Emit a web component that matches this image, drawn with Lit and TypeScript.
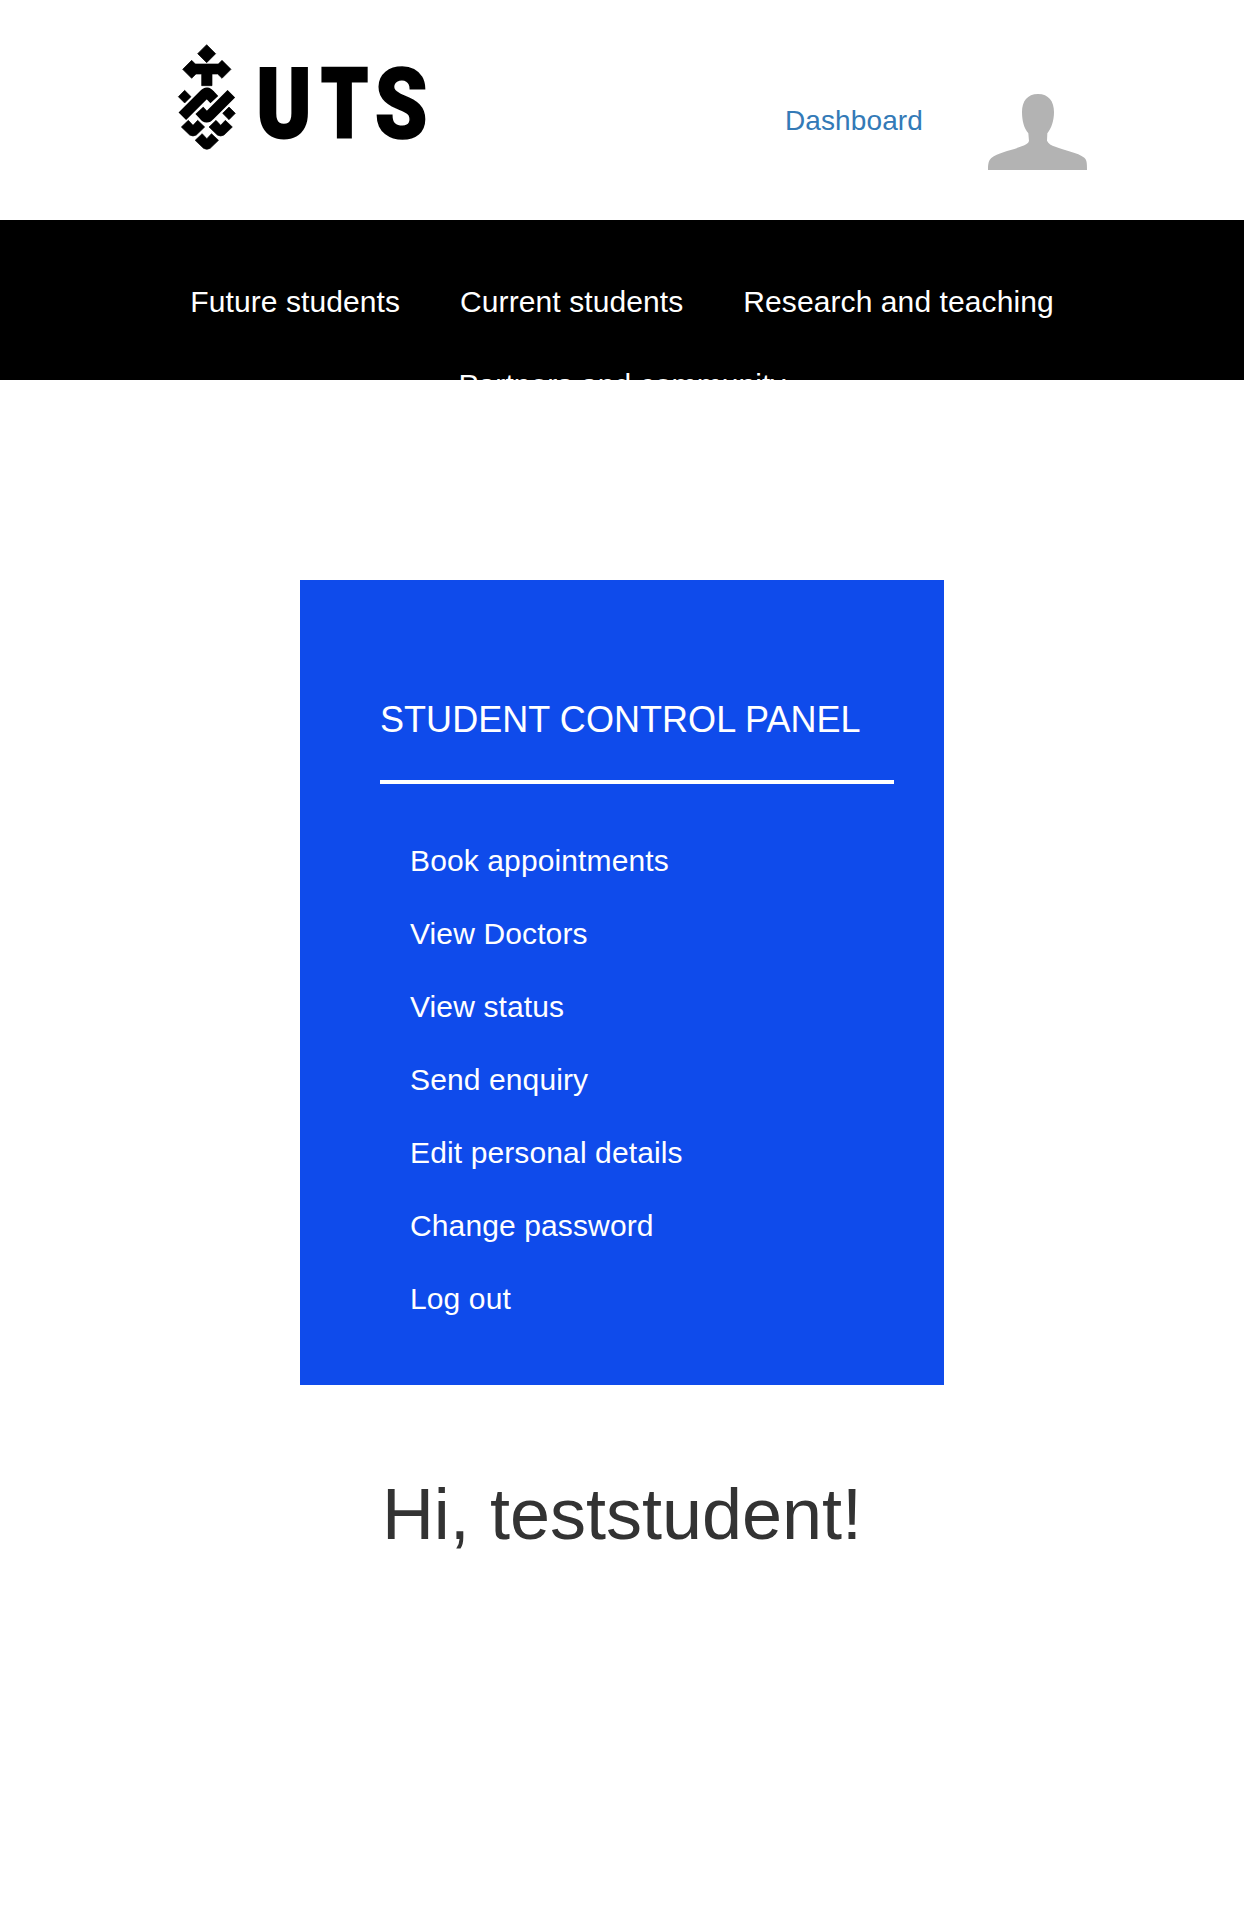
import { LitElement, html, svg, css } from "lit";
import { customElement } from "lit/decorators.js";

const NAV = ["Future students", "Current students", "Research and teaching", "Partners and community"];
const MENU = [
  "Book appointments",
  "View Doctors",
  "View status",
  "Send enquiry",
  "Edit personal details",
  "Change password",
  "Log out",
];

const chevron = (x: number, y: number) => svg`
  <path transform="translate(${x} ${y})"
    d="M-14 -20 L0 -5 L14 -20 L35 0 L10 24 Q0 30 -10 24 L-35 0Z"/>`;

@customElement("app-root")
export class AppRoot extends LitElement {
  static styles = css`
    :host {
      display: block;
      min-height: 1924px;
      background: #fff;
      color: #333;
      font: 30px/43px "Liberation Sans", Arial, sans-serif;
    }
    a { text-decoration: none; color: inherit; }
    ul { list-style: none; margin: 0; padding: 0; }
    .header {
      box-sizing: border-box;
      height: 220px;
      padding: 30px 157px 0 160px;
      display: flex;
      align-items: flex-start;
    }
    .logo { display: block; width: 280px; height: 130px; overflow: visible; }
    .wordmark {
      font-family: Roboto, sans-serif;
      font-weight: 900;
      font-size: 288px;
      stroke: #000;
      stroke-width: 9px;
    }
    .wordmark .curved {
      font-size: 294px;
      stroke-width: 5px;
    }
    .dashboard {
      margin: 71px 65px 0 auto;
      font-size: 28px;
      line-height: 40px;
      letter-spacing: 0.12px;
      color: #337ab7;
    }
    .avatar { display: block; width: 99px; height: 76px; margin-top: 64px; }
    .nav {
      box-sizing: border-box;
      height: 160px;
      overflow: hidden;
      background: #000;
      color: #fff;
      padding: 60px 160px 0;
    }
    .links {
      display: flex;
      flex-wrap: wrap;
      justify-content: center;
      gap: 40px 60px;
      letter-spacing: 0.09px;
    }
    .panel {
      box-sizing: border-box;
      width: 644px;
      height: 805px;
      margin: 200px auto 0;
      padding: 114px 50px 0 80px;
      background: #0f4beb;
      color: #fff;
    }
    .title {
      margin: 0;
      padding-bottom: 35px;
      border-bottom: 4px solid #fff;
      font-size: 36px;
      line-height: 51px;
      font-weight: 400;
      letter-spacing: 0.06px;
    }
    .menu {
      display: flex;
      flex-direction: column;
      gap: 30px;
      padding: 55px 0 0 30px;
      letter-spacing: 0.12px;
    }
    .greeting {
      margin: 90px 0 0;
      text-align: center;
      font-size: 72px;
      line-height: 79px;
      font-weight: 400;
    }
  `;

  render() {
    return html`
      <header class="header">
        <svg class="logo" viewBox="0 0 840 390">
          <g stroke="#000" stroke-width="2" stroke-linejoin="round">
            <path d="M140 44 L167 71 L140 98 L113 71Z"/>
            <path d="M68 118 L95 91 L106 102 H175 L186 91 L213 118 L186 145 L173 132 H156 V167 H125 V132 H108 L95 145Z"/>
            <path d="M74 181 L93 200 L74 219 L55 200Z M207 231 L226 250 L207 269 L188 250Z"/>
            ${chevron(99, 291)} ${chevron(182, 291)} ${chevron(140.5, 331)}
          </g>
          <g fill="none" stroke="#000" stroke-width="32" stroke-linejoin="round">
            <path d="M67 259 L133 193 Q141 183 149 194 L163 209"/>
            <path d="M214 191 L148 257 Q140 267 132 256 L118 241"/>
          </g>
          <g class="wordmark">
            <text transform="translate(290 321.5) scale(.85 1)">U</text>
            <text transform="translate(484 321.5) scale(.77 1)">T</text>
            <text class="curved" transform="translate(644 323.5) scale(.86 1)">S</text>
          </g>
        </svg>
        <a class="dashboard">Dashboard</a>
        <svg class="avatar" viewBox="684 42 297 228" preserveAspectRatio="none" fill="#b3b3b3">
          <path d="M834 42 C866 42 882 64 882 96 C882 122 874 145 862 160 L861 182 C865 191 874 196 886 200 C912 211 954 217 973 233 C981 240 981 252 981 270 H684 C684 252 686 241 694 234 C715 217 755 211 785 199 C797 195 805 190 807 183 L805 160 C792 145 786 122 786 96 C786 64 802 42 834 42Z"/>
        </svg>
      </header>
      <nav class="nav">
        <ul class="links">${NAV.map((t) => html`<li><a>${t}</a></li>`)}</ul>
      </nav>
      <section class="panel">
        <h2 class="title">STUDENT CONTROL PANEL</h2>
        <ul class="menu">${MENU.map((t) => html`<li><a>${t}</a></li>`)}</ul>
      </section>
      <h1 class="greeting">Hi, teststudent!</h1>
    `;
  }
}
